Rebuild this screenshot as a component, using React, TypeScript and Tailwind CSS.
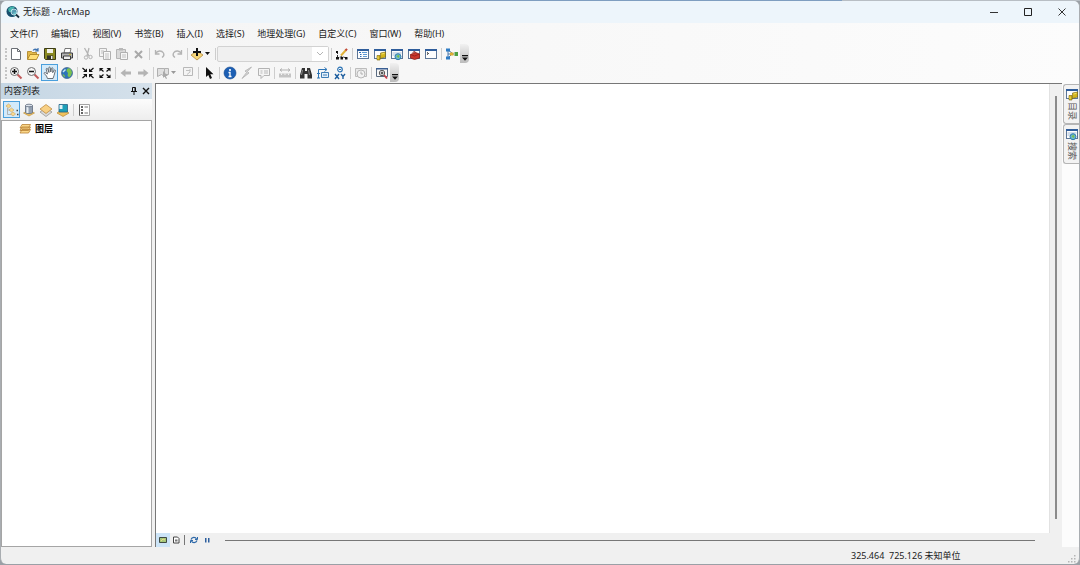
import { useState } from "react";
import type { ReactNode } from "react";

type Tool = {
    id: string;
    label: string;
    icon: ReactNode;
    active?: boolean;
    disabled?: boolean;
    split?: boolean;
};

type Item = Tool | "sep" | "combo";

const MENUS = [
    "文件(F)",
    "编辑(E)",
    "视图(V)",
    "书签(B)",
    "插入(I)",
    "选择(S)",
    "地理处理(G)",
    "自定义(C)",
    "窗口(W)",
    "帮助(H)",
];

function Svg({ children }: { children: ReactNode }) {
    return (
        <svg viewBox="0 0 14 14" className="size-3.5 shrink-0" fill="none" aria-hidden="true">
            {children}
        </svg>
    );
}

// Window frame shared by the table, catalog, search, toolbox and python icons
function Frame({ children }: { children?: ReactNode }) {
    return (
        <Svg>
            <rect x="1.5" y="2.5" width="11" height="9" fill="#fdfdfd" stroke="#5d7697" />
            <path d="M1 2h12v2H1z" fill="#2f5d9b" />
            {children}
        </Svg>
    );
}

const catalogIcon = (
    <Frame>
        <path d="M4 8.500h3V13H4zM7.500 6l5-1v5l-5 1.500z" fill="#d3b51c" stroke="#7a650c" strokeWidth=".6" />
        <path d="M8.500 7l3-.6M5 9.500v2.500" stroke="#f4e06a" />
    </Frame>
);

const searchIcon = (
    <Frame>
        <path d="M2.500 6h9M2.500 8h3" stroke="#a9bfd8" />
        <circle cx="8" cy="9.700" r="3" fill="#6db7c9" stroke="#2f7cae" />
        <path d="M6.500 9l2-1 1 1-1 2z" fill="#7cc043" />
    </Frame>
);

const globeIcon = (
    <Svg>
        <circle cx="7" cy="7" r="5.500" fill="#2c73ba" stroke="#3c5f86" strokeWidth=".7" />
        <path d="M7 3c1.500-1.500 3-.5 4 .5l1 3-1 3-2 2-1.500-2 .5-2.500L6.500 5zM2.500 8l2 1 .5 2.500-1.500-1z" fill="#7cc24f" />
        <path d="M3 6l2.500-2.500" stroke="#c7e8f2" strokeWidth="1.500" />
    </Svg>
);

const magnifier = (plus: boolean) => (
    <Svg>
        <path d="M8.500 8.500l4 4" stroke="#c05a5a" strokeWidth="2" />
        <circle cx="5.500" cy="5.500" r="4" fill="#f7f7f7" stroke="#6e6e6e" />
        <path d={plus ? "M3 5.500h5M5.500 3v5" : "M3 5.500h5"} stroke="#111" strokeWidth="1.500" />
    </Svg>
);

const ROW_ONE: Item[] = [
    {
        id: "new",
        label: "新建",
        icon: (
            <Svg>
                <path d="M2.500 1.500h6l3 3v8h-9z" fill="#fff" stroke="#6b6f75" />
                <path d="M8.500 1.500v3h3" stroke="#6b6f75" />
            </Svg>
        ),
    },
    {
        id: "open",
        label: "打开",
        icon: (
            <Svg>
                <path d="M1.500 12V4.500h4l1 1h4V12z" fill="#e3b94b" stroke="#a87d1d" strokeWidth=".8" />
                <path d="M1.500 12.500l2.500-5h9l-2.500 5z" fill="#ffdf78" stroke="#a87d1d" strokeWidth=".8" />
                <path d="M7 3.500c1-1.500 3-1.500 4.500-.5M12 1v3H9" stroke="#3f73b0" strokeWidth="1.200" />
            </Svg>
        ),
    },
    {
        id: "save",
        label: "保存",
        icon: (
            <Svg>
                <path d="M1.500 1.500h11v11h-10l-1-1z" fill="#8b8a22" stroke="#3c3c18" />
                <path d="M4 2h6v4H4z" fill="#f2f2ea" />
                <path d="M4 8.500h6V12H4z" fill="#35352a" />
                <path d="M8 9h1.500v3H8z" fill="#f2f2ea" />
            </Svg>
        ),
    },
    {
        id: "print",
        label: "打印",
        icon: (
            <Svg>
                <path d="M4 6l1-4.500h6L10 6z" fill="#fff" stroke="#555" strokeWidth=".8" />
                <path d="M1.500 6h11v5h-11z" fill="#b4b4b4" stroke="#3d3d3d" />
                <path d="M3.500 9h7v3.500h-7z" fill="#eee" stroke="#3d3d3d" />
                <path d="M9 7.500h2" stroke="#c8b92f" />
            </Svg>
        ),
    },
    "sep",
    {
        id: "cut",
        label: "剪切",
        disabled: true,
        icon: (
            <Svg>
                <path d="M3.500 1l4.500 8M8 1L6 9" stroke="#b3b3b3" strokeWidth="1.300" />
                <circle cx="5" cy="10.500" r="1.700" stroke="#b3b3b3" />
                <circle cx="9.500" cy="10" r="1.700" stroke="#b3b3b3" />
            </Svg>
        ),
    },
    {
        id: "copy",
        label: "复制",
        disabled: true,
        icon: (
            <Svg>
                <path d="M1.500 1.500h7v8h-7z" fill="#f4f4f4" stroke="#b5b5b5" />
                <path d="M5.500 4.500h7v8h-7z" fill="#f8f8f8" stroke="#b0b0b0" />
                <path d="M7 7h4M7 9h4M7 11h4M3 4h3M3 6h2" stroke="#c0c0c0" />
            </Svg>
        ),
    },
    {
        id: "paste",
        label: "粘贴",
        disabled: true,
        icon: (
            <Svg>
                <path d="M1.500 2.500h9v9h-9z" fill="#d9d9d9" stroke="#b5b5b5" />
                <path d="M4 1h4v2.500H4z" fill="#b8b8b8" />
                <path d="M5.500 5.500h7v7h-7z" fill="#f6f6f6" stroke="#b0b0b0" />
                <path d="M7 8h4M7 10h4" stroke="#c0c0c0" />
            </Svg>
        ),
    },
    {
        id: "delete",
        label: "删除",
        disabled: true,
        icon: (
            <Svg>
                <path d="M3 4l7 7M10 4l-7 7" stroke="#a9a9a9" strokeWidth="2" />
            </Svg>
        ),
    },
    "sep",
    {
        id: "undo",
        label: "撤消",
        disabled: true,
        icon: (
            <Svg>
                <path d="M2.500 3v4h4M2.500 6.500c2-3 6-3.500 8-.5 1 2 0 3.500-1.500 4.500" stroke="#b3b3b3" strokeWidth="1.300" />
            </Svg>
        ),
    },
    {
        id: "redo",
        label: "恢复",
        disabled: true,
        icon: (
            <Svg>
                <path d="M11.500 3v4h-4M11.500 6.500c-2-3-6-3.500-8-.5-1 2 0 3.500 1.500 4.500" stroke="#b3b3b3" strokeWidth="1.300" />
            </Svg>
        ),
    },
    "sep",
    {
        id: "add",
        label: "添加数据",
        split: true,
        icon: (
            <Svg>
                <path d="M1 8l6-4 6 4-6 5z" fill="#f6d77a" stroke="#b58a3a" strokeWidth=".8" />
                <path d="M7 1v8M3 5h8" stroke="#111" strokeWidth="2" />
            </Svg>
        ),
    },
    "sep",
    "combo",
    "sep",
    {
        id: "editor",
        label: "编辑器工具条",
        icon: (
            <Svg>
                <path d="M2.500 5v6l4-1.500 5 1.500" stroke="#333" strokeDasharray="2 1" />
                <path d="M1 4h2v2H1zM1 10h3v2.500H1zM5.500 10H8v2.500H5.500zM10 10h2.500v2.500H10z" fill="#111" />
                <path d="M6 8.500l5-5.500" stroke="#e0b23a" strokeWidth="2" />
                <path d="M10.500 3.500l1.500-1.700" stroke="#c24a3a" strokeWidth="2" />
            </Svg>
        ),
    },
    "sep",
    {
        id: "toc",
        label: "内容列表",
        icon: (
            <Frame>
                <path d="M3 5.500h2M4 7.500h1.500M4 9.500h1.500" stroke="#2c6cb8" />
                <path d="M6 5.500h5M7 7.500h4M7 9.500h4" stroke="#5f9ad4" />
            </Frame>
        ),
    },
    { id: "catalog", label: "目录", icon: catalogIcon },
    { id: "search", label: "搜索", icon: searchIcon },
    {
        id: "toolbox",
        label: "工具箱",
        icon: (
            <Frame>
                <path d="M3.500 7.500l5-2 4 1.500v4l-5 1.500-4-1.500z" fill="#c9362c" stroke="#8f1f19" strokeWidth=".8" />
                <path d="M3.500 7.500l4 1.500 5-2M6 6V5l2-.5V6" stroke="#8f1f19" strokeWidth=".8" />
            </Frame>
        ),
    },
    {
        id: "python",
        label: "Python",
        icon: (
            <Frame>
                <path d="M3 5.500L4.500 6.500 3 7.500" stroke="#222" />
            </Frame>
        ),
    },
    "sep",
    {
        id: "model",
        label: "模型构建器",
        icon: (
            <Svg>
                <path d="M3 3v8M3 7h6M3 3l4 3M3 11l4-4" stroke="#4b79ab" />
                <path d="M1 1.500h4v3H1zM1 9.500h4v3H1z" fill="#2f7cc4" />
                <path d="M5 5.500h3.500v3H5z" fill="#e0ae2e" />
                <path d="M9.500 5h3.500v4H9.500z" fill="#4e9f42" />
            </Svg>
        ),
    },
];

const ROW_TWO: Item[] = [
    { id: "zoom-in", label: "放大", icon: magnifier(true) },
    { id: "zoom-out", label: "缩小", icon: magnifier(false) },
    {
        id: "pan",
        label: "平移",
        active: true,
        icon: (
            <Svg>
                <path
                    d="M4.500 12.500L3.500 10 1.200 7.500c-.3-1 .8-1.300 1.500-.7L4.500 8 3.200 3.200c0-1 1.200-1.100 1.500-.2L6 6.500 5.800 1.800c.1-1 1.300-1 1.500 0L7.800 6l.7-3.700c.3-.9 1.400-.7 1.400.2L9.700 6.700l1.400-2.500c.5-.7 1.500-.3 1.300.5L11 9.500l-1 3z"
                    fill="#fff"
                    stroke="#4a5058"
                    strokeWidth=".8"
                />
            </Svg>
        ),
    },
    { id: "full", label: "全图", icon: globeIcon },
    "sep",
    {
        id: "fixed-in",
        label: "固定比例放大",
        icon: (
            <Svg>
                <path d="M1.500 2l4 3.500M12.500 2l-4 3.500M1.500 12l4-3.500M12.500 12l-4-3.500" stroke="#111" strokeWidth="1.200" />
                <path d="M6 2.500V6H2zM8 2.500V6h4zM6 11.500V8H2zM8 11.500V8h4z" fill="#111" />
            </Svg>
        ),
    },
    {
        id: "fixed-out",
        label: "固定比例缩小",
        icon: (
            <Svg>
                <path d="M2 2.500l3.500 3M12 2.500l-3.500 3M2 11.500l3.500-3M12 11.500l-3.500-3" stroke="#111" strokeWidth="1.200" />
                <path d="M1.500 5.500V2h4zM12.500 5.500V2h-4zM1.500 8.500V12h4zM12.500 8.500V12h-4z" fill="#111" />
            </Svg>
        ),
    },
    "sep",
    {
        id: "back",
        label: "返回",
        disabled: true,
        icon: (
            <Svg>
                <path d="M1.500 7l5-4v2.500H12v3H6.500V11z" fill="#b4b4b4" />
            </Svg>
        ),
    },
    {
        id: "forward",
        label: "前进",
        disabled: true,
        icon: (
            <Svg>
                <path d="M12.500 7l-5-4v2.500H2v3h5.500V11z" fill="#b4b4b4" />
            </Svg>
        ),
    },
    "sep",
    {
        id: "select-features",
        label: "选择要素",
        split: true,
        disabled: true,
        icon: (
            <Svg>
                <path d="M1.500 2.500h7v8l-3-2-4 2zM8.500 2.500h4v6h-4" fill="#e0e0e0" stroke="#b0b0b0" />
                <path d="M7 5v7l1.500-1.500L10 13l1-.5L9.800 10H12z" fill="#a9a9a9" />
            </Svg>
        ),
    },
    {
        id: "clear",
        label: "清除所选",
        disabled: true,
        icon: (
            <Svg>
                <path d="M2.500 1.500h9v8h-9z" fill="#f4f4f4" stroke="#b8b8b8" />
                <path d="M5 4.500h4M9 3v3L6 8.500" stroke="#c0c0c0" />
            </Svg>
        ),
    },
    "sep",
    {
        id: "pointer",
        label: "选择元素",
        icon: (
            <Svg>
                <path d="M4 1v10l2.300-2 1.700 4 2-1-1.700-3.700H11.500z" fill="#111" />
            </Svg>
        ),
    },
    "sep",
    {
        id: "identify",
        label: "识别",
        icon: (
            <Svg>
                <circle cx="7" cy="7" r="6" fill="#1c5fb4" stroke="#164a8e" strokeWidth=".6" />
                <circle cx="7" cy="4" r="1.100" fill="#fff" />
                <path d="M5.500 6.500H7v4M5.500 10.500h3" stroke="#fff" strokeWidth="1.300" />
            </Svg>
        ),
    },
    {
        id: "hyperlink",
        label: "超链接",
        disabled: true,
        icon: (
            <Svg>
                <path d="M11.500 1L5 5l1.500 1.500L2 12.500l7-5.500L7.500 5.500z" fill="#d2d2d2" stroke="#b3b3b3" strokeWidth=".8" />
            </Svg>
        ),
    },
    {
        id: "popup",
        label: "HTML 弹出窗口",
        disabled: true,
        icon: (
            <Svg>
                <path d="M1.500 2.500h11v7H7l-3 3v-3H1.500z" fill="#f4f4f4" stroke="#b3b3b3" />
                <path d="M3.500 5h2M3.500 7h2M7 5h4M7 7h4" stroke="#b8b8b8" />
            </Svg>
        ),
    },
    "sep",
    {
        id: "measure",
        label: "测量",
        disabled: true,
        icon: (
            <Svg>
                <path d="M2 4h10M4 2.500L2 4l2 1.500M10 2.500L12 4l-2 1.500" stroke="#b3b3b3" />
                <path d="M1 7.500h12v4H1z" fill="#c4c4c4" />
                <path d="M3.500 7.500v1.500M7 7.500v1.500M10.500 7.500v1.500" stroke="#f4f4f4" />
            </Svg>
        ),
    },
    "sep",
    {
        id: "find",
        label: "查找",
        icon: (
            <Svg>
                <path d="M3 2h3v3h2V2h3l2 7v3.500H8.500V8h-3v4.500H1V9z" fill="#333" />
                <path d="M3.500 4L2.500 9M9.500 4l1 5" stroke="#8b8b8b" />
            </Svg>
        ),
    },
    {
        id: "find-route",
        label: "查找路径",
        icon: (
            <Svg>
                <path d="M5.500 6.500h7v5h-7z" fill="#e3eff9" stroke="#3f7db5" />
                <path d="M2.500 12V3.500h8M8.500 1.500l2.500 2-2.500 2M1 7.500h3M1 12h3" stroke="#2d74b5" />
                <path d="M7 9h4" stroke="#3f7db5" />
            </Svg>
        ),
    },
    {
        id: "goto-xy",
        label: "转到 XY",
        icon: (
            <Svg>
                <circle cx="7" cy="3.500" r="2.300" stroke="#2d74b5" strokeWidth="1.200" />
                <path d="M6 3.500h2" stroke="#2d74b5" />
                <path d="M2 8l4 5M6 8l-4 5M8 8l2 2.500L12 8M10 10.500V13" stroke="#1f5f9f" strokeWidth="1.400" />
            </Svg>
        ),
    },
    "sep",
    {
        id: "time",
        label: "时间滑块",
        disabled: true,
        icon: (
            <Svg>
                <path d="M1.500 2.500h11v8h-11z" fill="#e9e9e9" stroke="#bcbcbc" />
                <circle cx="7" cy="8" r="4" fill="#f2f2f2" stroke="#b8b8b8" />
                <path d="M7 5.500V8h2" stroke="#b0b0b0" />
            </Svg>
        ),
    },
    "sep",
    {
        id: "viewer",
        label: "创建查看器窗口",
        icon: (
            <Svg>
                <path d="M1.500 2.500h11v8h-11z" fill="#f6f6f6" stroke="#5a6b80" />
                <path d="M1 2h12v1.500H1z" fill="#3a5f94" />
                <path d="M9 9l3 3.500" stroke="#c4404a" strokeWidth="1.800" />
                <circle cx="7" cy="7" r="2.700" fill="#fff" stroke="#555" />
                <path d="M5.500 7h3M7 5.500v3" stroke="#222" />
            </Svg>
        ),
    },
];

const layersIcon = (
    <Svg>
        <path
            d="M4 7.500h8.500L10.500 11H2zM4 5h8.500l-2 3.500H2zM4 2.500h8.500l-2 3.500H2z"
            fill="#fbd88a"
            stroke="#b98233"
            strokeWidth=".8"
        />
    </Svg>
);

const TOC_TOOLS: Item[] = [
    {
        id: "by-order",
        label: "按绘制顺序列出",
        active: true,
        icon: (
            <Svg>
                <path d="M2.500 5v6.500h5M2.500 7h3" stroke="#a5a5a5" strokeWidth=".8" />
                <path d="M3.500 1l2.500 2-2.500 2L1 3zM6.500 5L9 7 6.500 9 4 7zM8 9l2.500 2L8 13l-2.500-2z" fill="#f8d890" stroke="#cfa45a" strokeWidth=".6" />
                <path d="M11.500 7.500H13M12 11.500h1.500" stroke="#444" strokeWidth="1.300" />
            </Svg>
        ),
    },
    {
        id: "by-source",
        label: "按源列出",
        icon: (
            <Svg>
                <path d="M1.500 10L7 7l5.500 3L7 13z" fill="#f1c25c" stroke="#b98a35" strokeWidth=".6" />
                <path d="M3.500 2.500v7c0 1.500 7 1.500 7 0v-7" fill="#93a0b1" stroke="#5f6b7c" strokeWidth=".8" />
                <path d="M5.500 3v7" stroke="#e7edf4" strokeWidth="2" />
                <ellipse cx="7" cy="2.500" rx="3.500" ry="1.300" fill="#dce3ec" stroke="#5f6b7c" strokeWidth=".8" />
            </Svg>
        ),
    },
    {
        id: "by-visibility",
        label: "按可见性列出",
        icon: (
            <Svg>
                <path d="M1 9l6-4 6 4-6 4.500z" fill="#d9d9d9" stroke="#8c8c8c" strokeWidth=".7" />
                <path d="M1 6l6-4.500L13 6l-6 4.500z" fill="#f8d084" stroke="#b98235" strokeWidth=".7" />
            </Svg>
        ),
    },
    {
        id: "by-selection",
        label: "按选择列出",
        icon: (
            <Svg>
                <path d="M1 10l6-4 6 4-6 3.500z" fill="#f1c25c" stroke="#b98a35" strokeWidth=".7" />
                <path d="M3 1.500h8.500V9H3z" fill="#1d9fb8" stroke="#2a6184" strokeWidth=".8" />
                <path d="M3.500 2h3v4h-3z" fill="#e2f1f5" />
            </Svg>
        ),
    },
    "sep",
    {
        id: "options",
        label: "选项",
        icon: (
            <Svg>
                <path d="M2.500 1.500h10v11h-10z" fill="#fdfdfd" stroke="#a3a3a3" />
                <path d="M2.500 1.500v11" stroke="#555" />
                <path d="M4 4h2M4 7h2M4 10h2" stroke="#333" strokeWidth="1.300" />
                <path d="M7.500 4H11M7.500 10H11" stroke="#777" />
            </Svg>
        ),
    },
];

function ToolButton({ tool }: { tool: Tool }) {
    return (
        <button
            type="button"
            aria-label={tool.label}
            disabled={tool.disabled}
            className={`flex h-[17px] shrink-0 items-center border ${
                tool.split ? "w-6 justify-between" : "w-[17px] justify-center"
            } ${tool.active ? "border-[#4a9fdc] bg-[#d3eafa]" : "border-transparent"}`}
        >
            {tool.icon}
            {tool.split && (
                <svg viewBox="0 0 5 3" className="mr-0.5 h-[3px] w-[5px]" aria-hidden="true">
                    <path d="M0 0h5L2.500 3z" fill={tool.disabled ? "#999" : "#111"} />
                </svg>
            )}
        </button>
    );
}

function Separator() {
    return (
        <span className="flex w-1 shrink-0 justify-center">
            <span className="h-3 w-px bg-[#cdcdcd]" />
        </span>
    );
}

function Scale() {
    return (
        <span className="relative flex h-4 w-28 shrink-0">
            <select
                aria-label="地图比例"
                disabled
                className="h-4 w-28 appearance-none rounded-[2px] border border-[#d2d2d2] bg-[#f0f0f0] text-[9px]"
            />
            <span className="pointer-events-none absolute top-px right-px flex h-3.5 w-4 items-center justify-center bg-white">
                <svg viewBox="0 0 8 5" className="h-[5px] w-2" fill="none" aria-hidden="true">
                    <path d="M1 1l3 3 3-3" stroke="#b5b5b5" />
                </svg>
            </span>
        </span>
    );
}

function Items({ items }: { items: Item[] }) {
    return (
        <>
            {items.map((item, i) => {
                if (item === "sep") return <Separator key={i} />;
                if (item === "combo") return <Scale key={i} />;
                return <ToolButton key={item.id} tool={item} />;
            })}
        </>
    );
}

function Toolbar({ label, items }: { label: string; items: Item[] }) {
    return (
        <div role="toolbar" aria-label={label} className="flex h-[19px] items-center pl-1">
            <span className="h-3 w-0 border-l-2 border-dotted border-[#c4c4c4]" />
            <Items items={items} />
            <button
                type="button"
                aria-label="工具条选项"
                className="flex h-[19px] w-[9px] items-end justify-center rounded-r-sm bg-linear-to-b from-[#f1f1f1] to-[#bcbcbc] pb-0.5"
            >
                <svg viewBox="0 0 6 6" className="size-1.5" aria-hidden="true">
                    <path d="M0 0h6v1.200H0zM0 2.500h6L3 5.800z" fill="#111" />
                </svg>
            </button>
        </div>
    );
}

function TitleBar() {
    return (
        <header className="flex h-[22px] shrink-0 items-center bg-[#edf5fb] pl-[5px]">
            <svg viewBox="0 0 14 14" className="size-3.5" fill="none" aria-hidden="true">
                <circle cx="6" cy="6.500" r="5.500" fill="#174f6e" />
                <path d="M2 4c2-3 5-3 7-2L7 4 6 7 3 7zM7 8l3-1 1 1-2 3.500z" fill="#43b3ad" />
                <circle cx="8" cy="7" r="3" fill="#7fc9dc" fillOpacity=".6" stroke="#d8eef5" strokeWidth=".8" />
                <path d="M10 9.500l3 3" stroke="#1b2f3d" strokeWidth="1.800" />
            </svg>
            <h1 className="ml-[3px] flex-1 text-[9px] leading-4 text-[#1b1b1b]">无标题 - ArcMap</h1>
            <button type="button" aria-label="最小化" className="flex h-full w-[34px] items-center justify-center">
                <svg viewBox="0 0 10 10" className="size-2.5" fill="none" aria-hidden="true">
                    <path d="M1 5.500h8" stroke="#333" />
                </svg>
            </button>
            <button type="button" aria-label="最大化" className="flex h-full w-[34px] items-center justify-center">
                <svg viewBox="0 0 10 10" className="size-2.5" fill="none" aria-hidden="true">
                    <path d="M1.500 1.500h7v7h-7z" stroke="#222" />
                </svg>
            </button>
            <button type="button" aria-label="关闭" className="flex h-full w-[34px] items-center justify-center">
                <svg viewBox="0 0 10 10" className="size-2.5" fill="none" aria-hidden="true">
                    <path d="M1.500 1.500l7 7M8.500 1.500l-7 7" stroke="#333" />
                </svg>
            </button>
        </header>
    );
}

function ContentsPanel({ onClose }: { onClose: () => void }) {
    return (
        <aside className="flex w-[151px] shrink-0 flex-col">
            <div className="flex h-4 shrink-0 items-center bg-linear-to-r from-[#c5d6e4] to-[#d5e1eb] pl-[3px]">
                <h2 className="flex-1 text-[9px] leading-4 text-[#1b1b1b]">内容列表</h2>
                <button type="button" aria-label="自动隐藏" className="flex size-3 items-center justify-center">
                    <svg viewBox="0 0 8 8" className="size-2" fill="none" aria-hidden="true">
                        <path d="M2.500 4.500v-4h3v4M1 4.500h6M4 4.500V8" stroke="#111" />
                        <path d="M4.500 1h1v3.500h-1z" fill="#111" />
                    </svg>
                </button>
                <button type="button" aria-label="关闭面板" onClick={onClose} className="flex size-3 items-center justify-center">
                    <svg viewBox="0 0 8 8" className="size-2" fill="none" aria-hidden="true">
                        <path d="M1 1l6 6M7 1L1 7" stroke="#111" strokeWidth="1.400" />
                    </svg>
                </button>
            </div>
            <div
                role="toolbar"
                aria-label="列表方式"
                className="flex h-[21px] shrink-0 items-center bg-linear-to-b from-[#fcfcfc] to-[#ededed] pl-0.5"
            >
                <Items items={TOC_TOOLS} />
            </div>
            <ul className="flex-1 border border-[#a5a5a5] bg-white pl-4">
                <li className="flex h-4 items-center gap-[3px] text-[9px] leading-4 font-bold text-black">
                    {layersIcon}
                    图层
                </li>
            </ul>
        </aside>
    );
}

function MapView() {
    return (
        <main className="flex min-w-0 flex-1 flex-col border-t border-l border-[#777] bg-[#f0f0f0]">
            <div className="flex min-h-0 flex-1">
                <div className="flex-1 bg-white" />
                <div className="flex w-[13px] justify-center border-l border-[#e2e2e2] pt-3 pb-3.5">
                    <span className="w-0.5 bg-[#8b8b8b]" />
                </div>
            </div>
            <div className="flex h-3.5 items-center pr-[27px]">
                <button type="button" aria-label="数据视图" className="flex h-3.5 w-3.5 items-center justify-center bg-[#cce4f7]">
                    <svg viewBox="0 0 8 8" className="size-2" fill="none" aria-hidden="true">
                        <path d="M.5 1.500h7v5h-7z" fill="#a5c77b" stroke="#3f4a44" />
                        <path d="M2 5l2-2 2 1" stroke="#e8dc85" />
                    </svg>
                </button>
                <button type="button" aria-label="布局视图" className="flex h-3.5 w-3 items-center justify-center">
                    <svg viewBox="0 0 8 8" className="size-2" fill="none" aria-hidden="true">
                        <path d="M1.500 1h4l1.500 1.500V7H1.500z" fill="#fff" stroke="#444" />
                        <path d="M3 3.500h2.500v2H3z" fill="#777" />
                    </svg>
                </button>
                <span className="mx-0.5 h-2.5 w-px bg-[#777]" />
                <button type="button" aria-label="刷新" className="flex h-3.5 w-3.5 items-center justify-center">
                    <svg viewBox="0 0 8 8" className="size-2" fill="none" aria-hidden="true">
                        <path d="M1 3.500C2 .8 5.500.8 6.500 3M7 4.500C6 7.200 2.500 7.200 1.500 5" stroke="#2d68a8" strokeWidth="1.200" />
                        <path d="M7.500 1v2.500H5M.5 7V4.500H3" stroke="#2d68a8" />
                    </svg>
                </button>
                <button type="button" aria-label="暂停" className="flex h-3.5 w-3 items-center justify-center">
                    <svg viewBox="0 0 8 8" className="size-2" aria-hidden="true">
                        <path d="M2 2h1.500v4.500H2zM5 2h1.500v4.500H5z" fill="#2d5f9e" />
                    </svg>
                </button>
                <span className="ml-3 h-px flex-1 bg-[#777]" />
            </div>
        </main>
    );
}

function SideTabs() {
    return (
        <nav aria-label="停靠窗口" className="flex w-[17px] shrink-0 flex-col bg-[#fcfcfc] pt-px pl-px">
            {[
                { label: "目录", icon: catalogIcon },
                { label: "搜索", icon: searchIcon },
            ].map((tab) => (
                <button
                    key={tab.label}
                    type="button"
                    className="flex h-10 flex-col items-center gap-px rounded-l-[3px] border border-r-0 border-[#b5b5b5] bg-[#f3f3f3] pt-0.5"
                >
                    {tab.icon}
                    <span className="text-[9px] leading-3 text-[#555] [text-orientation:sideways] [writing-mode:vertical-rl]">
                        {tab.label}
                    </span>
                </button>
            ))}
        </nav>
    );
}

export default function App() {
    const [contentsOpen, setContentsOpen] = useState(true);

    return (
        <div className="flex h-screen flex-col bg-[#9aa0a6] pb-px font-['Noto_Sans','Noto_Sans_CJK_SC',sans-serif]">
            <div className="flex h-px shrink-0 bg-[#b8bec4]">
                <span className="ml-[37%] w-[41%] bg-[#7f9ec0]" />
            </div>
            <div className="flex min-h-0 flex-1 flex-col overflow-hidden rounded-md border-x border-[#a9adb1] bg-[#f0f0f0]">
                <TitleBar />
                <div className="shrink-0 bg-linear-to-r from-[#f4f4f4] to-[#fcfcfc] pb-px">
                    <nav aria-label="菜单栏" className="flex h-[21px] items-center gap-px pl-[3px]">
                        {MENUS.map((menu) => (
                            <button key={menu} type="button" className="px-1.5 text-[9px] leading-4 text-[#1b1b1b]">
                                {menu}
                            </button>
                        ))}
                    </nav>
                    <Toolbar label="标准工具" items={ROW_ONE} />
                    <Toolbar label="工具" items={ROW_TWO} />
                </div>
                <div className="flex min-h-0 flex-1 gap-[3px]">
                    {contentsOpen && <ContentsPanel onClose={() => setContentsOpen(false)} />}
                    <div className="flex min-w-0 flex-1">
                        <MapView />
                        <SideTabs />
                    </div>
                </div>
                <footer className="flex h-[17px] shrink-0 items-end justify-end">
                    <output className="w-[216px] text-[9px] leading-4 whitespace-pre text-[#1b1b1b]">
                        325.464  725.126 未知单位
                    </output>
                    <svg viewBox="0 0 10 10" className="mr-0.5 size-2.5" aria-hidden="true">
                        <path d="M7 1h1.500v1.500H7zM4 4h1.500v1.500H4zM7 4h1.500v1.500H7zM1 7h1.500v1.500H1zM4 7h1.500v1.500H4zM7 7h1.500v1.500H7z" fill="#b5b5b5" />
                    </svg>
                </footer>
            </div>
        </div>
    );
}
